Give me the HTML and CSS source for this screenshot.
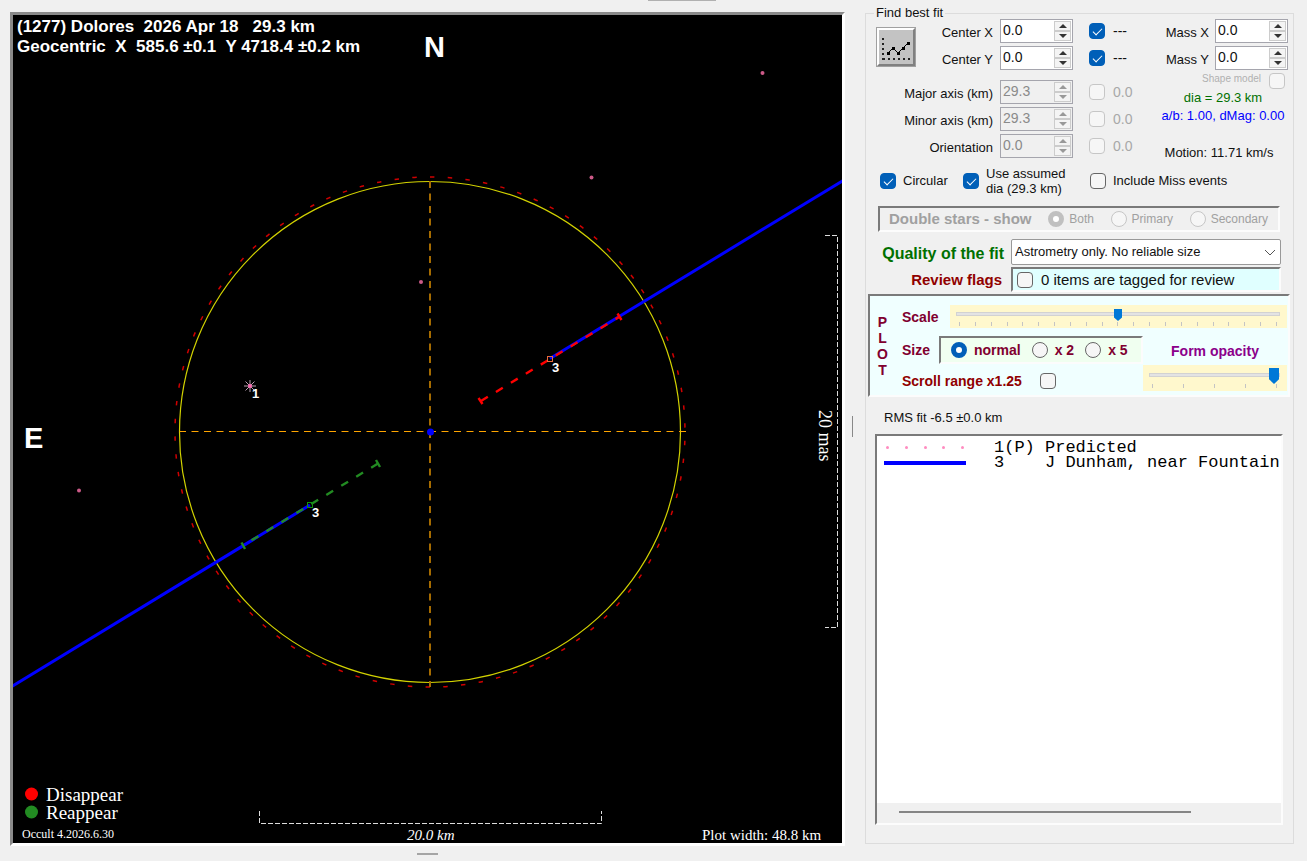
FILE: index.html
```html
<!DOCTYPE html>
<html lang="en">
<head>
  <meta charset="UTF-8">
  <meta name="viewport" content="width=device-width, initial-scale=1.0">
  <title>Occult - (1277) Dolores</title>
  <link rel="stylesheet" href="styles.css">
</head>
<body>

<div class="grip-top"></div>

<main>
  <div class="plot">
    <svg viewBox="0 0 829 828">
      <!-- Fitted ellipse and assumed diameter -->
      <g fill="none">
        <circle class="assumed" cx="417" cy="417" r="255" pathLength="360"/>
        <circle class="fitted" cx="417" cy="417" r="250.5"/>
        <path class="axis-v" d="M417 166V672"/>
        <path class="axis-h" d="M166 416.5H673"/>
      </g>

      <!-- Chord 3 -->
      <g fill="none">
        <path class="chord" d="M537 343.5L831 165M297 490L-2 672"/>
        <path class="dis dashed" d="M468 386L606 302"/>
        <path class="dis" d="M465.500 383L469.500 389M604.500 298.500L608.500 305"/>
        <path class="rea dashed" d="M365 448.500L230 530.500"/>
        <path class="rea" d="M363 445L367 452M228.500 527.500L232 534"/>
        <rect x="534.500" y="341.500" width="5" height="5" stroke="#e86a3a"/>
        <rect x="294.500" y="487.500" width="5" height="5" stroke="#109010"/>
      </g>
      <circle cx="417.500" cy="417" r="3.500" fill="#0000ff"/>

      <!-- Predicted points -->
      <g class="star">
        <path d="M237 365V377M231 371H243M232.500 366.500L241.500 375.500M241.500 366.500L232.500 375.500"/>
      </g>
      <g fill="#cc5a88">
        <circle cx="749.500" cy="58" r="2"/>
        <circle cx="578.500" cy="162.500" r="2"/>
        <circle cx="408" cy="267" r="2"/>
        <circle cx="237" cy="371" r="2" fill="#ff69b4"/>
        <circle cx="66" cy="475.500" r="2"/>
      </g>

      <!-- Scale bars -->
      <path class="bar" d="M246.500 796V808.500H588.500V796"/>
      <path class="bar" d="M812 220.500H824.500V612.500H812"/>

      <circle cx="18.500" cy="779" r="6.500" fill="#ff0000"/>
      <circle cx="18.500" cy="797" r="6.500" fill="#228b22"/>

      <g class="sans">
        <text x="4" y="17" font-size="17">(1277) Dolores&#160; 2026 Apr 18&#160;&#160; 29.3 km</text>
        <text x="4" y="37" font-size="17">Geocentric&#160; X&#160; 585.6 ±0.1&#160; Y 4718.4 ±0.2 km</text>
        <text x="411" y="42" font-size="29">N</text>
        <text x="11" y="433" font-size="29">E</text>
        <text x="539" y="357" font-size="13">3</text>
        <text x="299" y="502" font-size="13">3</text>
        <text x="239" y="383" font-size="13">1</text>
      </g>
      <g class="serif">
        <text x="33" y="786" font-size="19">Disappear</text>
        <text x="33" y="804" font-size="19">Reappear</text>
        <text x="9" y="823" font-size="12">Occult 4.2026.6.30</text>
        <text x="394" y="825" font-size="15" font-style="italic">20.0 km</text>
        <text x="689" y="825" font-size="15">Plot width: 48.8 km</text>
        <text transform="translate(806 395) rotate(90)" font-size="18">20 mas</text>
      </g>
    </svg>
  </div>

  <div class="splitter"></div>

  <fieldset class="side">
    <legend>Find best fit</legend>

    <div class="fit">
      <button class="chart-btn" aria-label="Plot residuals">
        <svg width="34" height="32" viewBox="0 0 34 32">
          <path d="M4 7V29" stroke="#222" stroke-width="2" stroke-dasharray="2 3"/>
          <path d="M4 28H31" stroke="#222" stroke-width="2" stroke-dasharray="2 3"/>
          <path d="M9 22L14 17L19 22L24 17L29 12" fill="none" stroke="#000" stroke-width="1"/>
          <path d="M8 21h3v3h-3zM13 16h3v3h-3zM18 21h3v3h-3zM23 16h3v3h-3zM28 11h3v3h-3z"/>
        </svg>
      </button>

      <div class="params">
        <div class="param">
          <label for="cx">Center X</label>
          <span class="spin"><input type="text" id="cx" value="0.0"><button class="up" aria-label="Up"></button><button class="down" aria-label="Down"></button></span>
          <input type="checkbox" id="cx-on" checked><label for="cx-on" class="val">---</label>
        </div>
        <div class="param">
          <label for="cy">Center Y</label>
          <span class="spin"><input type="text" id="cy" value="0.0"><button class="up" aria-label="Up"></button><button class="down" aria-label="Down"></button></span>
          <input type="checkbox" id="cy-on" checked><label for="cy-on" class="val">---</label>
        </div>
        <div class="param first-axis">
          <label for="major">Major axis (km)</label>
          <span class="spin off"><input type="text" id="major" value="29.3" disabled><button class="up" aria-label="Up" disabled></button><button class="down" aria-label="Down" disabled></button></span>
          <input type="checkbox" id="major-on" disabled><label for="major-on" class="val off">0.0</label>
        </div>
        <div class="param">
          <label for="minor">Minor axis (km)</label>
          <span class="spin off"><input type="text" id="minor" value="29.3" disabled><button class="up" aria-label="Up" disabled></button><button class="down" aria-label="Down" disabled></button></span>
          <input type="checkbox" id="minor-on" disabled><label for="minor-on" class="val off">0.0</label>
        </div>
        <div class="param">
          <label for="orient">Orientation</label>
          <span class="spin off"><input type="text" id="orient" value="0.0" disabled><button class="up" aria-label="Up" disabled></button><button class="down" aria-label="Down" disabled></button></span>
          <input type="checkbox" id="orient-on" disabled><label for="orient-on" class="val off">0.0</label>
        </div>
      </div>

      <div class="mass">
        <div class="mass-row">
          <label for="mx">Mass X</label>
          <span class="spin"><input type="text" id="mx" value="0.0"><button class="up" aria-label="Up"></button><button class="down" aria-label="Down"></button></span>
        </div>
        <div class="mass-row">
          <label for="my">Mass Y</label>
          <span class="spin"><input type="text" id="my" value="0.0"><button class="up" aria-label="Up"></button><button class="down" aria-label="Down"></button></span>
        </div>
        <div class="shape">
          <label for="shape">Shape model</label>
          <input type="checkbox" id="shape" disabled>
        </div>
        <div class="dia">dia = 29.3 km</div>
        <div class="ab">a/b: 1.00, dMag: 0.00</div>
        <div class="motion">Motion: 11.71 km/s</div>
      </div>
    </div>

    <div class="options">
      <input type="checkbox" id="circular" checked><label for="circular" class="circular">Circular</label>
      <input type="checkbox" id="assumed" checked><label for="assumed" class="assumed-label">Use assumed<br>dia (29.3 km)</label>
      <input type="checkbox" id="miss"><label for="miss">Include Miss events</label>
    </div>

    <div class="double sunken">
      <strong>Double stars - show</strong>
      <span><input type="radio" name="double" id="both" checked disabled><label for="both">Both</label></span>
      <span><input type="radio" name="double" id="primary" disabled><label for="primary">Primary</label></span>
      <span><input type="radio" name="double" id="secondary" disabled><label for="secondary">Secondary</label></span>
    </div>

    <div class="quality">
      <label for="quality" class="green">Quality of the fit</label>
      <div class="select-box">
        <select id="quality"><option>Astrometry only. No reliable size</option></select>
        <svg width="12" height="8" viewBox="0 0 12 8"><path d="M1 1L6 6L11 1" fill="none" stroke="#555"/></svg>
      </div>
      <span class="red">Review flags</span>
      <div class="review sunken">
        <input type="checkbox" id="review"><label for="review">0 items are tagged for review</label>
      </div>
    </div>

    <div class="plot-opts sunken">
      <div class="plot-word">P<br>L<br>O<br>T</div>
      <div class="plot-rows">
        <div class="scale-row">
          <label for="scale">Scale</label>
          <div class="slider">
            <input type="range" id="scale" min="0" max="20" value="10">
            <div class="ticks"><i></i><i></i><i></i><i></i><i></i><i></i><i></i><i></i><i></i><i></i><i></i><i></i><i></i><i></i><i></i><i></i><i></i><i></i><i></i><i></i><i></i></div>
          </div>
        </div>
        <div class="lower">
          <div class="lower-left">
            <div class="size-row">
              <span>Size</span>
              <div class="sizes sunken">
                <input type="radio" name="size" id="s1" checked><label for="s1">normal</label>
                <input type="radio" name="size" id="s2"><label for="s2">x 2</label>
                <input type="radio" name="size" id="s5"><label for="s5">x 5</label>
              </div>
            </div>
            <div class="scroll-row">
              <label for="scroll">Scroll range x1.25</label><input type="checkbox" id="scroll">
            </div>
          </div>
          <div class="opacity">
            <label for="opacity">Form opacity</label>
            <div class="slider big">
              <input type="range" id="opacity" min="0" max="4" value="4">
              <div class="ticks"><i></i><i></i><i></i><i></i><i></i></div>
            </div>
          </div>
        </div>
      </div>
    </div>

    <div class="rms">RMS fit -6.5 ±0.0 km</div>

    <div class="chords sunken">
      <div class="chord-list">
        <div class="chord-row"><span class="key dots"><i></i><i></i><i></i><i></i><i></i></span><span>1(P) Predicted</span></div>
        <div class="chord-row"><span class="key line"></span><span>3    J Dunham, near Fountain</span></div>
      </div>
      <div class="hscroll"><div class="hthumb"></div></div>
    </div>
  </fieldset>
</main>

<div class="grip-bottom"></div>

</body>
</html>
```
FILE: styles.css
```css
* {
  box-sizing: border-box;
}

body {
  margin: 0;
  min-height: 100vh;
  background-color: #f0f0f0;
  color: #111;
  font-family: "Liberation Sans", Arial, sans-serif;
  font-size: 14px;
  line-height: 16px;
}

main {
  display: flex;
  padding: 0 13px 0 10px;
}

.grip-top {
  width: 68px;
  height: 1px;
  margin: 0 0 6px 648px;
  background-color: #b0b0b0;
}

.grip-bottom {
  width: 21px;
  height: 2px;
  margin: 7px 0 0 417px;
  background-color: #a5a5a5;
}

/* Plot */
.plot {
  flex: 1;
  min-width: 0;
  margin-top: 5px;
  background-color: #000;
  border: 3px solid #8a8a8a;
  border-right-color: #fff;
  border-bottom-color: #fff;
}

.plot svg {
  display: block;
  width: 100%;
  height: auto;
}

.assumed {
  stroke: #d00000;
  stroke-width: 1.5;
  stroke-dasharray: 1 3;
  stroke-dashoffset: -2;
}

.fitted {
  stroke: #d2d200;
  stroke-width: 1.2;
}

.axis-v {
  stroke: #a56b00;
  stroke-width: 2;
  stroke-dasharray: 7 5.5;
}

.axis-h {
  stroke: #ffa500;
  stroke-width: 1.2;
  stroke-dasharray: 7 5.5;
}

.chord {
  stroke: #0000ff;
  stroke-width: 3;
}

.dis {
  stroke: #ff0000;
  stroke-width: 2.4;
}

.rea {
  stroke: #228b22;
  stroke-width: 2.4;
}

.dashed {
  stroke-dasharray: 8 9.5;
}

.star path {
  stroke: #b8a0b0;
}

.bar {
  fill: none;
  stroke: #ddd;
  stroke-dasharray: 5 2;
}

.sans {
  fill: #fff;
  font-family: "Liberation Sans", Arial, sans-serif;
  font-weight: bold;
}

.serif {
  fill: #fff;
  font-family: "Liberation Serif", "Times New Roman", serif;
}

.splitter {
  width: 20px;
  flex: none;
  display: flex;
  align-items: center;
  padding-left: 7px;
}

.splitter::before {
  content: "";
  width: 1px;
  height: 21px;
  background-color: #888;
}

/* Side panel */
.side {
  width: 429px;
  min-width: 0;
  flex: none;
  display: flex;
  flex-direction: column;
  margin: 0 0 2px;
  padding: 0;
  border: 1px solid #dcdcdc;
}

.side legend {
  margin-left: 8px;
  padding: 0 2px;
  font-size: 13px;
  line-height: 12px;
}

.sunken {
  border: 2px solid #7a7a7a;
  border-right-color: #fcfcfc;
  border-bottom-color: #fcfcfc;
}

input, button, select {
  font: inherit;
  margin: 0;
  padding: 0;
}

input[type="checkbox"], input[type="radio"] {
  appearance: none;
  flex: none;
  width: 16px;
  height: 16px;
  border: 1px solid #666;
  border-radius: 4px;
  background-color: #f6f6f6;
  display: block;
}

input[type="radio"] {
  border-radius: 50%;
}

input[type="checkbox"]:checked {
  background-color: #005fb8;
  border-color: #005fb8;
}

input[type="checkbox"]:checked::after {
  content: "";
  display: block;
  width: 8px;
  height: 4px;
  margin: 4px 0 0 3px;
  border: solid #fff;
  border-width: 0 0 1px 1px;
  transform: rotate(-45deg);
}

input[type="radio"]:checked {
  border: 5px solid #005fb8;
  background-color: #fff;
}

input[type="checkbox"]:disabled, input[type="radio"]:disabled {
  border-color: #c6c6c6;
}

.fit {
  display: flex;
  padding: 0 5px 0 10px;
}

.chart-btn {
  width: 40px;
  height: 40px;
  margin-top: 8px;
  flex: none;
  background-color: #c3c3c3;
  border: 3px solid #fff;
  border-right-color: #808080;
  border-bottom-color: #808080;
  outline: 1px solid #a0a0a0;
  outline-offset: -1px;
}

.chart-btn svg {
  display: block;
}

.params {
  flex: 1;
  display: flex;
  flex-direction: column;
  gap: 3px;
  margin-left: -16px;
}

.param {
  display: flex;
  align-items: center;
  height: 24px;
}

.param > label:first-child {
  width: 93px;
  text-align: right;
  font-size: 13px;
  padding-top: 3px;
}

.param .spin {
  margin: 0 16px 0 7px;
}

.first-axis {
  margin-top: 7px;
}

.val {
  margin-left: 8px;
}

.val.off {
  color: #a8a8a8;
}

.spin {
  flex: none;
  display: grid;
  grid-template-columns: 1fr 17px;
  grid-template-rows: 10px 10px;
  width: 73px;
  height: 24px;
  padding: 1px;
  border: 1px solid #a5a5ad;
  background-color: #fff;
}

.spin input {
  grid-row: span 2;
  width: 100%;
  height: 18px;
  border: 0;
  padding-left: 1px;
  background: none;
  color: #111;
}

.spin button {
  display: flex;
  align-items: center;
  justify-content: center;
  border: 1px solid #ccc;
  background-color: #f4f4f4;
}

.spin button::before {
  content: "";
  border: 4px solid transparent;
  border-top-width: 0;
  border-bottom-color: #333;
}

.spin .down::before {
  border-width: 4px 4px 0;
  border-top-color: #333;
}

.spin.off {
  background-color: #f0f0f0;
}

.spin.off input {
  color: #8a8a8a;
}

.spin.off button::before {
  border-bottom-color: #999;
  border-top-color: #999;
}

.mass {
  width: 130px;
  flex: none;
}

.mass-row {
  display: flex;
  align-items: center;
  justify-content: flex-end;
  gap: 6px;
  height: 24px;
  margin-bottom: 3px;
  font-size: 13px;
}

.mass-row label {
  padding-top: 3px;
}

.mass-row .spin {
  font-size: 14px;
}

.shape {
  display: flex;
  justify-content: flex-end;
  gap: 8px;
  height: 17px;
  padding-right: 3px;
  color: #b0b0b0;
  font-size: 10px;
  line-height: 12px;
}

.dia, .ab, .motion {
  font-size: 13px;
  height: 18px;
  text-align: center;
}

.dia {
  color: #007000;
}

.ab {
  color: #0000ff;
}

.motion {
  margin-top: 19px;
  padding-right: 8px;
}

.options {
  display: flex;
  align-items: center;
  height: 32px;
  margin: 2px 0 0 14px;
}

.options label {
  margin-left: 7px;
  font-size: 13px;
}

.options .circular {
  width: 60px;
}

.options .assumed-label {
  width: 104px;
  line-height: 15px;
}

.double {
  display: flex;
  align-items: center;
  justify-content: space-between;
  height: 26px;
  margin: 9px 13px 0 12px;
  padding: 0 10px 0 9px;
  color: #a0a0a0;
}

.double strong {
  font-size: 15px;
}

.double span {
  display: flex;
  align-items: center;
  gap: 5px;
  font-size: 12px;
}

.double input:checked:disabled {
  border-color: #c0c0c0;
}

.quality {
  display: grid;
  grid-template-columns: 138px 1fr;
  grid-template-rows: 26px 25px;
  row-gap: 2px;
  margin: 7px 12px 0 0;
  align-items: center;
}

.green, .red {
  font-size: 15px;
  font-weight: bold;
  text-align: right;
}

.green {
  color: #007000;
  font-size: 16px;
  padding-top: 4px;
}

.red {
  color: #900000;
  padding-right: 2px;
}

.select-box, .review {
  margin-left: 7px;
}

.select-box {
  position: relative;
  height: 26px;
}

.select-box select {
  appearance: none;
  width: 100%;
  height: 26px;
  padding-left: 3px;
  border: 1px solid #999;
  border-radius: 2px;
  background-color: #fff;
  color: #111;
  font-size: 13px;
}

.select-box svg {
  position: absolute;
  right: 5px;
  top: 10px;
  pointer-events: none;
}

.review {
  display: flex;
  align-items: center;
  gap: 8px;
  height: 25px;
  padding-left: 4px;
  background-color: #e0ffff;
  font-size: 15px;
}

.plot-opts {
  display: flex;
  height: 103px;
  margin: 2px 3px 0 2px;
  background-color: #f0ffff;
  color: #80002f;
  font-weight: bold;
}

.plot-word {
  width: 26px;
  padding-top: 18px;
  text-align: center;
}

.plot-rows {
  flex: 1;
  padding: 9px 1px 0 7px;
}

.scale-row {
  display: flex;
  align-items: center;
}

.scale-row label {
  width: 48px;
}

.slider {
  flex: 1;
  height: 23px;
  padding: 1px 7px 0 6px;
  background-color: #fff8cd;
}

.slider input {
  appearance: none;
  display: block;
  width: 100%;
  height: 16px;
  background: none;
}

.slider input::-webkit-slider-runnable-track {
  height: 4px;
  background-color: #e3e3e3;
  border: 1px solid #d2d2d2;
}

.slider input::-webkit-slider-thumb {
  appearance: none;
  width: 8px;
  height: 12px;
  margin-top: -4px;
  background-color: #0078d7;
  clip-path: polygon(0 0, 100% 0, 100% 70%, 50% 100%, 0 70%);
}

.ticks {
  display: flex;
  justify-content: space-between;
  padding: 0 3px;
}

.ticks i {
  width: 1px;
  height: 4px;
  background-color: #c4c4c4;
}

.slider.big {
  flex: none;
  height: 26px;
  padding-top: 1px;
}

.slider.big input {
  height: 18px;
}

.slider.big input::-webkit-slider-thumb {
  width: 10px;
  height: 16px;
  margin-top: -6px;
}

.lower {
  display: flex;
  justify-content: space-between;
}

.size-row {
  display: flex;
  align-items: center;
  margin-top: 8px;
}

.size-row > span {
  width: 37px;
}

.sizes {
  display: flex;
  align-items: center;
  width: 204px;
  height: 28px;
  padding-left: 10px;
  background-color: #f0fff0;
}

.sizes label {
  margin: 0 11px 0 7px;
}

.scroll-row {
  display: flex;
  align-items: center;
  gap: 18px;
  margin-top: 9px;
  color: #900000;
}

.opacity {
  width: 144px;
  color: #8b008b;
}

.opacity label {
  display: block;
  margin: 15px 0 6px;
  text-align: center;
}

.rms {
  margin: 13px 0 8px 18px;
  font-size: 13px;
}

/* Chord listing */
.chords {
  flex: 1;
  display: flex;
  flex-direction: column;
  margin: 0 10px 18px 9px;
  background-color: #fff;
}

.chord-list {
  flex: 1;
  padding: 4px 0 0 7px;
  overflow: hidden;
  color: #000;
  font-family: "Liberation Mono", "Courier New", monospace;
  font-size: 17px;
}

.chord-row {
  display: flex;
  align-items: center;
  gap: 28px;
  height: 15px;
  line-height: 15px;
  white-space: pre;
}

.key {
  width: 82px;
  flex: none;
}

.dots {
  display: flex;
  justify-content: space-between;
  padding: 0 2px;
}

.dots i {
  width: 3px;
  height: 3px;
  border-radius: 50%;
  background-color: #ff8cc0;
}

.line {
  height: 4px;
  background-color: #0000ff;
}

.hscroll {
  height: 20px;
  padding: 8px 90px 0 22px;
  background-color: #f0f0f0;
}

.hthumb {
  height: 2px;
  background-color: #858585;
}
```
